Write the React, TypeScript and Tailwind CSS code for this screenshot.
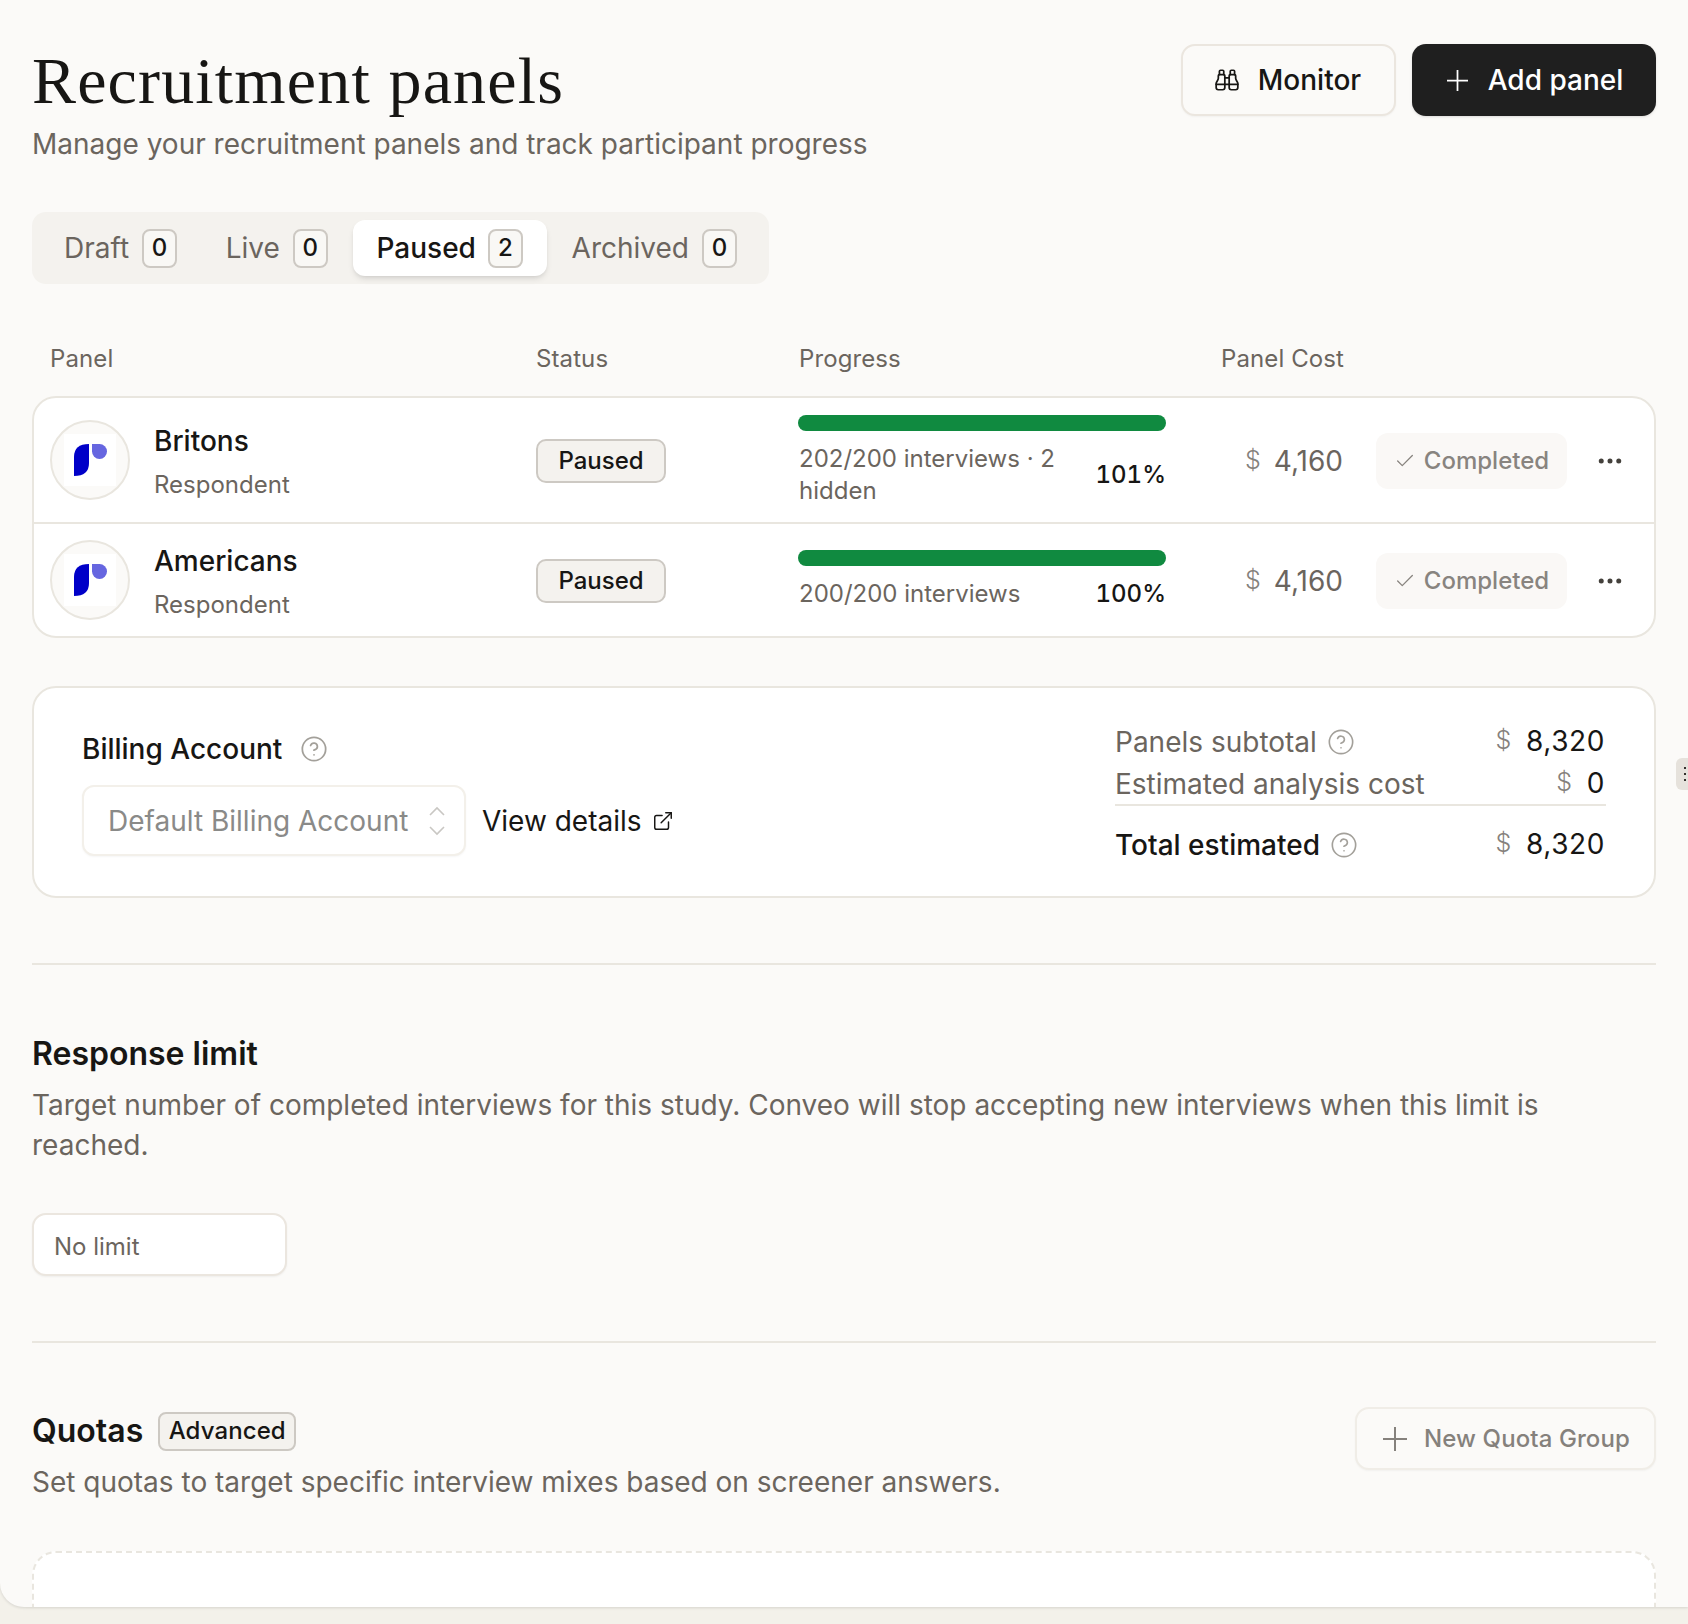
import { Binoculars, Check, CircleHelp, Ellipsis, ExternalLink } from 'lucide-react';

const tabs = [
  { label: 'Draft', count: 0 },
  { label: 'Live', count: 0 },
  { label: 'Paused', count: 2, active: true },
  { label: 'Archived', count: 0 },
];

const panels = [
  { name: 'Britons', lines: ['202/200 interviews · 2', 'hidden'], pct: '101%', tall: true },
  { name: 'Americans', lines: ['200/200 interviews'], pct: '100%', tall: false },
];

function Logo() {
  return (
    <div className="flex h-[80px] w-[80px] shrink-0 items-center justify-center rounded-full border-2 border-[#e9e6df] bg-[#fbfaf8]">
      <div className="flex h-[52px] w-[52px] items-center justify-center bg-white">
        <svg width="33" height="32" viewBox="0 0 33 32">
          <path d="M15 0V19Q15 32 0 32V13Q0 0 15 0Z" fill="#0000c8" />
          <path d="M18 0H25.5A7.5 7.5 0 1 1 18 7.5Z" fill="#6666e0" />
        </svg>
      </div>
    </div>
  );
}

function PlusMark({ size }: { size: number }) {
  return (
    <svg width={size} height={size} viewBox="0 0 24 24" fill="none" stroke="currentColor" strokeWidth="2">
      <path d="M12 0V24M0 12H24" />
    </svg>
  );
}

function Dollar({ className }: { className?: string }) {
  return <span className={`font-light text-[#85817c] ${className ?? ''}`}>$</span>;
}

function PanelRow({ panel, border }: { panel: (typeof panels)[number]; border: boolean }) {
  return (
    <div className={`flex items-center pl-[16px] ${panel.tall ? 'h-[126px]' : 'h-[112px]'} ${border ? 'border-b-2 border-[#e9e6df]' : ''}`}>
      <div className="flex w-[486px] shrink-0 items-center gap-[24px]">
        <Logo />
        <div className="flex flex-col pt-[4px]">
          <span className="text-[28px] leading-[40px] font-medium text-[#171614]">{panel.name}</span>
          <span className="mt-[6px] text-[24px] leading-[36px] text-[#6b655e]">Respondent</span>
        </div>
      </div>
      <div className="mt-[2px] w-[262px] shrink-0">
        <span className="inline-flex h-[44px] w-[130px] items-center justify-center rounded-[10px] border-2 border-[#cdc9c3] bg-[#f4f2ee] text-[24px] font-medium text-[#171614]">
          Paused
        </span>
      </div>
      <div className={`w-[368px] shrink-0 self-start ${panel.tall ? 'pt-[17px]' : 'pt-[26px]'}`}>
        <div className="h-[16px] rounded-full bg-[#108a40]" />
        <div className={`flex items-center justify-between ${panel.tall ? 'mt-[12px]' : 'mt-[10px]'}`}>
          <div className="w-[270px] pl-[1px] text-[24px] leading-[32px] text-[#6b655e]">
            {panel.lines.map((l) => (
              <div key={l}>{l}</div>
            ))}
          </div>
          <span className="text-[24px] font-medium text-[#171614] tabular-nums">{panel.pct}</span>
        </div>
      </div>
      <div className="mt-[2px] flex w-[177px] shrink-0 items-center justify-end gap-[13px] text-[28px] text-[#6b655e]">
        <Dollar className="text-[25px]" />
        <span>4,160</span>
      </div>
      <div className="mt-[2px] ml-[33px] flex h-[56px] w-[191px] items-center justify-center gap-[8px] rounded-[12px] bg-[#faf8f6] text-[24px] font-medium text-[#88847f]">
        <Check size={22} strokeWidth={1.4} />
        Completed
      </div>
      <Ellipsis size={30} strokeWidth={2} className="mt-[2px] ml-[28px] text-[#44413c]" />
    </div>
  );
}

function Total({ label, amount, help, strong }: { label: string; amount: string; help?: boolean; strong?: boolean }) {
  return (
    <div className="flex h-[40px] items-center justify-between pr-[1px]">
      <div className={`flex items-center gap-[10px] text-[28px] ${strong ? 'font-medium text-[#171614]' : 'text-[#6b655e]'}`}>
        {label}
        {help && <CircleHelp size={28} strokeWidth={1.4} className="text-[#a3a09a]" />}
      </div>
      <div className="mb-[3px] flex items-center gap-[14px] text-[28px] tracking-[0.6px] text-[#171614]">
        <Dollar className="text-[25px]" />
        {amount}
      </div>
    </div>
  );
}

export default function App() {
  return (
    <div className="relative h-[1624px] w-[1688px] overflow-hidden bg-[#f3f1ea] font-['Inter',sans-serif]">
      <div className="h-[1607px] overflow-hidden rounded-bl-[24px] bg-[#fbfaf8] px-[32px] pt-[44px] shadow-[0_1px_3px_rgba(0,0,0,0.12)]">
        <div className="flex items-start justify-between">
          <div>
            <h1 className="mt-[1px] font-['Liberation_Serif',serif] text-[66px] leading-[72px] tracking-[1.15px] text-[#171614]">Recruitment panels</h1>
            <p className="mt-[7px] text-[28px] leading-[40px] text-[#6b655e]">Manage your recruitment panels and track participant progress</p>
          </div>
          <div className="flex gap-[16px]">
            <button className="flex h-[72px] w-[215px] items-center justify-center gap-[18px] rounded-[14px] border-2 border-[#ebe6df] bg-[#fbfaf8] pr-[2px] text-[28px] font-medium text-[#171614] shadow-[0_1px_2px_rgba(0,0,0,0.04)]">
              <Binoculars size={26} strokeWidth={1.6} />
              Monitor
            </button>
            <button className="flex h-[72px] w-[244px] items-center justify-center gap-[20px] rounded-[14px] bg-[#1f1f1f] pl-[2px] text-[28px] font-medium text-white shadow-sm">
              <PlusMark size={21} />
              Add panel
            </button>
          </div>
        </div>

        <div className="mt-[48px] flex h-[72px] w-[737px] items-center justify-between rounded-[14px] bg-[#f4f2ee] px-[8px]">
          {tabs.map((t) => (
            <div
              key={t.label}
              className={`flex h-[56px] items-center rounded-[12px] px-[24px] text-[28px] ${t.active ? 'gap-[12px] bg-white font-medium text-[#171614] shadow-md' : 'gap-[13px] text-[#6b655e]'}`}
            >
              {t.label}
              <span className="flex h-[39px] w-[35px] items-center justify-center rounded-[8px] border-2 border-[#cdc9c3] bg-[#f9f8f5] text-[24px] font-medium text-[#171614]">{t.count}</span>
            </div>
          ))}
        </div>

        <div className="mt-[57px] flex h-[36px] items-center pl-[18px] text-[24px] tracking-[0.1px] text-[#6b655e]">
          <span className="w-[486px]">Panel</span>
          <span className="w-[263px]">Status</span>
          <span className="w-[367px]">Progress</span>
          <span className="w-[178px] text-right">Panel Cost</span>
        </div>

        <div className="mt-[19px] overflow-hidden rounded-[24px] border-2 border-[#e9e6df] bg-white">
          {panels.map((p, i) => (
            <PanelRow key={p.name} panel={p} border={i === 0} />
          ))}
        </div>

        <div className="mt-[48px] flex h-[212px] justify-between rounded-[24px] border-2 border-[#e9e6df] bg-white pl-[48px] pr-[48px]">
          <div className="pt-[43px]">
            <div className="flex h-[36px] items-center gap-[18px] text-[28px] font-medium text-[#171614]">
              Billing Account
              <CircleHelp size={28} strokeWidth={1.5} className="text-[#a3a09a]" />
            </div>
            <div className="mt-[18px] flex items-center gap-[16px]">
              <div className="flex h-[71px] w-[384px] items-center justify-between rounded-[12px] border-2 border-[#f3f0ea] bg-white pl-[24px] pr-[18px] text-[28px] text-[#8a8a88] shadow-[0_1px_2px_rgba(0,0,0,0.04)]">
                Default Billing Account
                <svg width="18" height="30" viewBox="0 0 18 30" fill="none" stroke="#c9c7c3" strokeWidth="1.6">
                  <path d="M2 9 9 2l7 7M2 21l7 7 7-7" />
                </svg>
              </div>
              <span className="text-[28px] text-[#171614]">View details</span>
              <ExternalLink size={22} strokeWidth={1.6} className="-ml-[6px] text-[#171614]" />
            </div>
          </div>
          <div className="w-[491px] pt-[34px]">
            <Total label="Panels subtotal" amount="8,320" help />
            <div className="mt-[2px] border-b-2 border-[#e9e6df]">
              <Total label="Estimated analysis cost" amount="0" />
            </div>
            <div className="mt-[19px]">
              <Total label="Total estimated" amount="8,320" help strong />
            </div>
          </div>
        </div>

        <div className="mt-[65px] h-[2px] bg-[#e9e6df]" />

        <h2 className="mt-[69px] text-[32px] leading-[40px] font-semibold text-[#171614]">Response limit</h2>
        <p className="mt-[11px] text-[28px] leading-[40px] text-[#6b655e]">
          Target number of completed interviews for this study. Conveo will stop accepting new interviews when this limit is reached.
        </p>
        <div className="mt-[48px] flex h-[63px] w-[255px] items-center rounded-[14px] border-2 border-[#ebe6df] bg-white pl-[20px] pt-[5px] text-[24px] text-[#6b655e] shadow-[0_1px_2px_rgba(0,0,0,0.05)]">No limit</div>

        <div className="mt-[65px] h-[2px] bg-[#e9e6df]" />

        <div className="mt-[64px] flex items-start justify-between">
          <div className="pt-[4px]">
            <div className="flex items-center gap-[15px]">
              <h2 className="text-[32px] leading-[40px] font-semibold text-[#171614]">Quotas</h2>
              <span className="flex h-[39px] w-[138px] items-center justify-center rounded-[8px] border-2 border-[#cdc9c3] bg-[#f4f2ee] text-[24px] font-medium tracking-[0.1px] text-[#171614]">Advanced</span>
            </div>
            <p className="mt-[11px] text-[28px] leading-[40px] text-[#6b655e]">Set quotas to target specific interview mixes based on screener answers.</p>
          </div>
          <button className="flex h-[63px] w-[301px] items-center justify-center gap-[17px] rounded-[14px] border-2 border-[#f0ede7] bg-[#fbfaf8] pl-[2px] text-[24px] font-medium tracking-[0.1px] text-[#85817c] shadow-[0_1px_2px_rgba(0,0,0,0.04)]">
            <PlusMark size={24} />
            New Quota Group
          </button>
        </div>

        <div className="mt-[49px] h-[120px] rounded-[24px] border-2 border-dashed border-[#e9e6df] bg-white" />
      </div>

      <div className="absolute right-0 top-[758px] flex h-[32px] w-[12px] flex-col items-center justify-center gap-[4px] rounded-l-[6px] bg-[#e6e2dc] pl-[6px]">
        <span className="h-[2px] w-[2px] bg-[#33302c]" />
        <span className="h-[2px] w-[2px] bg-[#33302c]" />
        <span className="h-[2px] w-[2px] bg-[#33302c]" />
      </div>
    </div>
  );
}
